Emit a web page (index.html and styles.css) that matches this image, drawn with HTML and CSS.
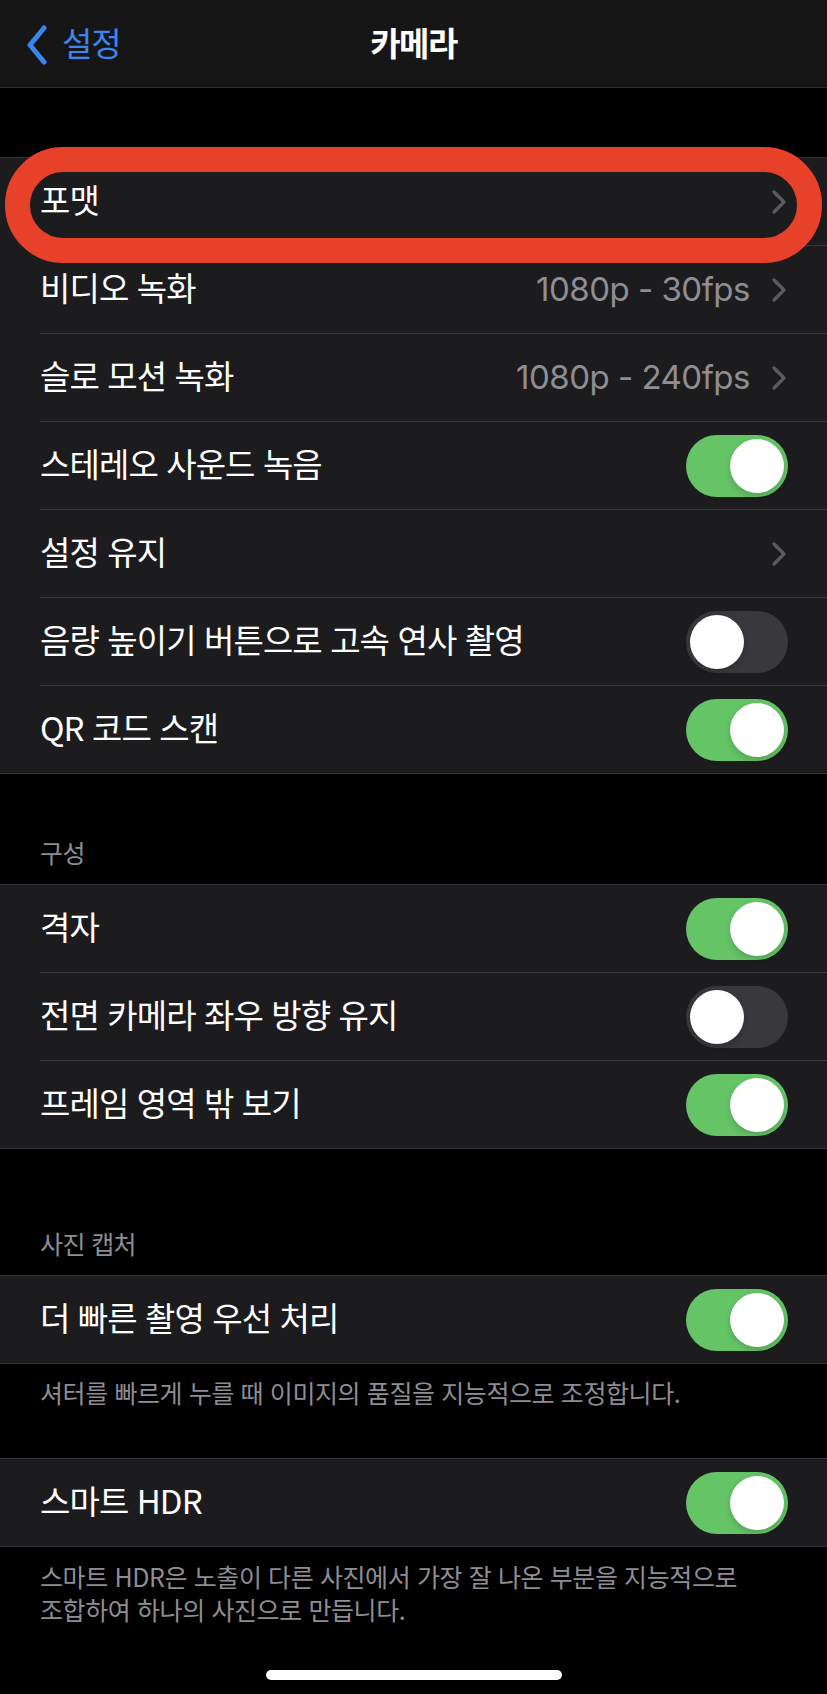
FILE: index.html
```html
<!DOCTYPE html>
<html lang="ko">
<head>
<meta charset="utf-8">
<title>카메라</title>
<link rel="stylesheet" href="styles.css">
</head>
<body>
<div class="screen">
  <header class="nav">
    <div class="nav-left">
      <svg class="back-icon" width="22" height="40" viewBox="0 0 22 40"><path d="M18 3 L4 20 L18 37" fill="none" stroke="#3c84ee" stroke-width="5" stroke-linecap="round" stroke-linejoin="round"/></svg>
      <span class="back-label">설정</span>
    </div>
    <div class="nav-title">카메라</div>
    <div class="nav-right"></div>
  </header>

  <div class="top-gap"></div>

  <section class="group group-first">
    <div class="highlight"></div>
    <div class="row"><div class="row-inner">
      <span class="label">포맷</span>
      <span class="accessory"><svg class="chev" width="16" height="24" viewBox="0 0 16 24"><path d="M3 2 L13 12 L3 22" fill="none" stroke="#5b5b5f" stroke-width="3.2" stroke-linecap="round" stroke-linejoin="round"/></svg></span>
    </div></div>
    <div class="row"><div class="row-inner">
      <span class="label">비디오 녹화</span>
      <span class="accessory"><span class="value">1080p - 30fps</span><svg class="chev" width="16" height="24" viewBox="0 0 16 24"><path d="M3 2 L13 12 L3 22" fill="none" stroke="#5b5b5f" stroke-width="3.2" stroke-linecap="round" stroke-linejoin="round"/></svg></span>
    </div></div>
    <div class="row"><div class="row-inner">
      <span class="label">슬로 모션 녹화</span>
      <span class="accessory"><span class="value">1080p - 240fps</span><svg class="chev" width="16" height="24" viewBox="0 0 16 24"><path d="M3 2 L13 12 L3 22" fill="none" stroke="#5b5b5f" stroke-width="3.2" stroke-linecap="round" stroke-linejoin="round"/></svg></span>
    </div></div>
    <div class="row"><div class="row-inner">
      <span class="label">스테레오 사운드 녹음</span>
      <span class="toggle on"><span class="knob"></span></span>
    </div></div>
    <div class="row"><div class="row-inner">
      <span class="label">설정 유지</span>
      <span class="accessory"><svg class="chev" width="16" height="24" viewBox="0 0 16 24"><path d="M3 2 L13 12 L3 22" fill="none" stroke="#5b5b5f" stroke-width="3.2" stroke-linecap="round" stroke-linejoin="round"/></svg></span>
    </div></div>
    <div class="row"><div class="row-inner">
      <span class="label">음량 높이기 버튼으로 고속 연사 촬영</span>
      <span class="toggle off"><span class="knob"></span></span>
    </div></div>
    <div class="row"><div class="row-inner">
      <span class="label">QR 코드 스캔</span>
      <span class="toggle on"><span class="knob"></span></span>
    </div></div>
  </section>

  <h2 class="section-header header-compose">구성</h2>
  <section class="group">
    <div class="row"><div class="row-inner">
      <span class="label">격자</span>
      <span class="toggle on"><span class="knob"></span></span>
    </div></div>
    <div class="row"><div class="row-inner">
      <span class="label">전면 카메라 좌우 방향 유지</span>
      <span class="toggle off"><span class="knob"></span></span>
    </div></div>
    <div class="row"><div class="row-inner">
      <span class="label">프레임 영역 밖 보기</span>
      <span class="toggle on"><span class="knob"></span></span>
    </div></div>
  </section>

  <h2 class="section-header header-capture">사진 캡처</h2>
  <section class="group">
    <div class="row"><div class="row-inner">
      <span class="label">더 빠른 촬영 우선 처리</span>
      <span class="toggle on"><span class="knob"></span></span>
    </div></div>
  </section>
  <p class="footer footer-one">셔터를 빠르게 누를 때 이미지의 품질을 지능적으로 조정합니다.</p>

  <section class="group">
    <div class="row"><div class="row-inner">
      <span class="label">스마트 HDR</span>
      <span class="toggle on"><span class="knob"></span></span>
    </div></div>
  </section>
  <p class="footer footer-two">스마트 HDR은 노출이 다른 사진에서 가장 잘 나온 부분을 지능적으로 조합하여 하나의 사진으로 만듭니다.</p>

  <div class="home-indicator"></div>
</div>
</body>
</html>
```

FILE: styles.css
```css
* { box-sizing: border-box; }

html, body {
  margin: 0;
  padding: 0;
  background: #000;
}

body {
  font-family: "Noto Sans CJK KR", "Noto Sans", sans-serif;
  color: #fff;
}

.screen {
  width: 827px;
  height: 1694px;
  overflow: hidden;
  background: #000;
}

/* Navigation bar */
.nav {
  height: 88px;
  background: #161616;
  border-bottom: 1px solid #2e2e30;
  display: grid;
  grid-template-columns: 1fr auto 1fr;
  align-items: center;
}

.nav-left {
  display: flex;
  align-items: center;
  padding-left: 26px;
  gap: 14px;
}

.back-icon { display: block; margin-top: 2px; }

.back-label {
  color: #3c84ee;
  font-size: 33px;
  line-height: 40px;
  padding-bottom: 4px;
  letter-spacing: -1.2px;
}

.nav-title {
  font-size: 33px;
  line-height: 40px;
  padding-bottom: 4px;
  font-weight: 700;
  letter-spacing: -1.5px;
}

.top-gap { height: 69px; }

/* Groups */
.group {
  position: relative;
  background: #1c1c1e;
  border-top: 1px solid #333336;
  border-bottom: 1px solid #333336;
}

.row {
  padding-left: 40px;
}

.row-inner {
  height: 88px;
  display: flex;
  align-items: center;
  justify-content: space-between;
  padding-right: 39px;
  border-bottom: 1px solid #38383a;
}

.row:last-child .row-inner {
  border-bottom: none;
  height: 87px;
}

.label {
  font-size: 33px;
  line-height: 40px;
  padding-bottom: 5px;
  letter-spacing: -0.9px;
  color: #fff;
  white-space: nowrap;
}

.accessory {
  display: flex;
  align-items: center;
  gap: 21px;
}

.value {
  font-family: "Inter", "Noto Sans CJK KR", sans-serif;
  font-size: 33px;
  line-height: 40px;
  padding-bottom: 2px;
  letter-spacing: -0.5px;
  color: #8e8e93;
}

.chev {
  display: block;
  margin-right: 1px;
}

/* Toggle switch */
.toggle {
  width: 102px;
  height: 62px;
  border-radius: 31px;
  padding: 4px;
  display: flex;
}

.toggle.on {
  background: #65c466;
  justify-content: flex-end;
}

.toggle.off {
  background: #39393d;
  justify-content: flex-start;
}

.knob {
  width: 54px;
  height: 54px;
  border-radius: 50%;
  background: #fff;
  box-shadow: 0 3px 6px rgba(0, 0, 0, 0.18);
}

/* Red highlight ring */
.highlight {
  position: absolute;
  left: 5px;
  top: -11px;
  width: 817px;
  height: 116px;
  border: 25px solid #e8412a;
  border-radius: 58px;
  pointer-events: none;
}

/* Section headers */
.section-header {
  margin: 0;
  padding-left: 40px;
  font-size: 25px;
  font-weight: 400;
  line-height: 32px;
  color: #8d8d93;
  letter-spacing: -0.6px;
}

.header-compose { margin-top: 62px; margin-bottom: 16px; }
.header-capture { margin-top: 78px; margin-bottom: 16px; }

/* Footers */
.footer {
  margin: 0;
  padding: 0 40px;
  font-size: 25px;
  line-height: 33px;
  color: #8d8d93;
  letter-spacing: -0.4px;
  word-break: keep-all;
}

.footer-one { margin-top: 12px; margin-bottom: 49px; }
.footer-two { margin-top: 13px; }

.home-indicator {
  width: 296px;
  height: 10px;
  border-radius: 5px;
  background: #fff;
  margin: 44px auto 0;
}
```
